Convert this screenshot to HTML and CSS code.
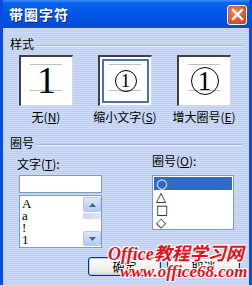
FILE: index.html
```html
<!DOCTYPE html>
<html lang="zh">
<head>
    <meta charset="UTF-8">
    <title>带圈字符</title>
    <link rel="stylesheet" href="styles.css">
</head>
<body>
    <div class="window">
        <div class="titlebar">
            <span class="title">带圈字符</span>
            <button class="close-button">
                <svg width="13" height="13" viewBox="0 0 13 13"><path d="M2 2 L11 11 M11 2 L2 11" stroke="#fff" stroke-width="2.4" stroke-linecap="square"/></svg>
            </button>
        </div>

        <div class="content">
            <div class="group-header"><span>样式</span><div class="group-line"></div></div>
            <div class="style-options">
                <div class="style-option">
                    <div class="preview"><span class="digit">1</span></div>
                    <div class="caption">无(<u>N</u>)</div>
                </div>
                <div class="style-option">
                    <div class="preview selected"><span class="ring small">1</span></div>
                    <div class="caption">缩小文字(<u>S</u>)</div>
                </div>
                <div class="style-option">
                    <div class="preview"><span class="ring big">1</span></div>
                    <div class="caption">增大圈号(<u>E</u>)</div>
                </div>
            </div>

            <div class="group-header second"><span>圈号</span><div class="group-line"></div></div>
            <div class="columns">
                <div class="col-left">
                    <div class="field-label">文字(<u>T</u>):</div>
                    <div class="text-input"></div>
                    <div class="listbox left-list">
                        <div class="items">
                            <div class="item">A</div>
                            <div class="item">a</div>
                            <div class="item">!</div>
                            <div class="item">1</div>
                        </div>
                        <div class="scrollbar">
                            <div class="scroll-btn"><svg width="7" height="4" viewBox="0 0 7 4"><path d="M0 4 L3.5 0 L7 4 Z" fill="#4d6185"/></svg></div>
                            <div class="thumb"></div>
                            <div class="track"></div>
                            <div class="scroll-btn"><svg width="7" height="4" viewBox="0 0 7 4"><path d="M0 0 L3.5 4 L7 0 Z" fill="#4d6185"/></svg></div>
                        </div>
                    </div>
                </div>
                <div class="col-right">
                    <div class="field-label right-label">圈号(<u>O</u>):</div>
                    <div class="listbox right-list">
                        <div class="item sym active">○</div>
                        <div class="item sym">△</div>
                        <div class="item sym">□</div>
                        <div class="item sym">◇</div>
                    </div>
                </div>
            </div>

            <div class="button-row">
                <button class="dlg-button">确定</button>
                <button class="dlg-button">取消</button>
            </div>
        </div>

        <div class="watermark">
            <div class="wm-top">Office教程学习网</div>
            <div class="wm-bottom">www.office68.com</div>
        </div>
    </div>
</body>
</html>
```

FILE: styles.css
```css
body {
    margin: 0;
    font-family: "Noto Sans CJK SC", "Liberation Sans", sans-serif;
    font-size: 12px;
    background-color: #c9d6f5;
}
.window {
    position: relative;
    width: 252px;
    height: 285px;
    box-sizing: border-box;
    border-left: 3px solid #0b4cdc;
    border-right: 3px solid #0b4cdc;
    overflow: hidden;
    background: repeating-linear-gradient(#cddaf6 0, #cddaf6 1px, #bfcff2 1px, #bfcff2 2px);
}
.titlebar {
    height: 28px;
    margin: 0 -3px;
    padding: 0 5px 0 9px;
    display: flex;
    align-items: center;
    justify-content: space-between;
    background: linear-gradient(#3d8ff8 0, #0a62ea 3px, #0058e6 45%, #004fdc 80%, #0b4cd6 100%);
}
.title {
    color: #fff;
    font-weight: bold;
    font-size: 14px;
    letter-spacing: 1px;
    text-shadow: 1px 1px 0 #0a2a8a;
}
.close-button {
    width: 20px;
    height: 20px;
    padding: 0;
    margin-top: 1px;
    border: 1px solid #fff;
    border-radius: 3px;
    background: radial-gradient(circle at 40% 35%, #f08a60 0, #e0552a 55%, #c33c14 100%);
    display: flex;
    align-items: center;
    justify-content: center;
}
.content {
    padding: 0 7px 0 7px;
}
.group-header {
    display: flex;
    align-items: center;
    height: 14px;
    margin-top: 9px;
    line-height: 14px;
    color: #000;
}
.group-header.second {
    margin-top: 12px;
}
.group-line {
    flex: 1;
    margin: 3px 0 0 3px;
    border-top: 1px solid #9fb2d8;
    border-bottom: 1px solid #eef3fd;
}
.style-options {
    display: flex;
    gap: 25px;
    padding-left: 9px;
    margin-top: 4px;
}
.style-option {
    width: 54px;
    display: flex;
    flex-direction: column;
    align-items: center;
}
.preview {
    width: 54px;
    height: 51px;
    box-sizing: border-box;
    background: #fff;
    border-top: 2px solid #404040;
    border-left: 2px solid #404040;
    border-right: 1px solid #d8d8d8;
    border-bottom: 1px solid #d8d8d8;
    display: flex;
    align-items: center;
    justify-content: center;
    background-image: linear-gradient(#c0c0c0, #c0c0c0), linear-gradient(#c0c0c0, #c0c0c0);
    background-size: 32px 1px;
    background-repeat: no-repeat;
    background-position: 9px 7px, 9px 33px;
}
.preview.selected {
    box-shadow: inset 0 0 0 2px #fff, inset 0 0 0 4px #4a72b0;
}
.digit {
    font-family: "Liberation Serif", serif;
    font-size: 38px;
    line-height: 38px;
    margin-top: -2px;
}
.ring {
    font-family: "Liberation Serif", serif;
    border: 1px solid #000;
    border-radius: 50%;
    display: flex;
    align-items: center;
    justify-content: center;
    box-sizing: border-box;
}
.ring.small {
    width: 22px;
    height: 22px;
    font-size: 19px;
}
.ring.big {
    width: 28px;
    height: 28px;
    font-size: 27px;
}
.caption {
    margin-top: 4px;
    line-height: 14px;
    white-space: nowrap;
}
.columns {
    display: flex;
    margin-top: 7px;
}
.col-left {
    width: 135px;
    padding-left: 7px;
}
.col-right {
    display: flex;
    flex-direction: column;
}
.field-label {
    line-height: 14px;
    height: 14px;
    margin-bottom: 4px;
}
.right-label {
    margin-top: -3px;
    margin-bottom: 7px;
    margin-left: 0;
}
.text-input {
    width: 83px;
    height: 18px;
    margin-left: 2px;
    box-sizing: border-box;
    background: #fff;
    border: 1px solid #7f9db9;
}
.listbox {
    background: #fff;
    border: 1px solid #7f9db9;
    box-sizing: border-box;
}
.left-list {
    width: 83px;
    height: 53px;
    margin-left: 2px;
    margin-top: 2px;
    display: flex;
}
.items {
    flex: 1;
    padding: 2px 0 0 2px;
}
.item {
    height: 12px;
    line-height: 12px;
    font-family: "Liberation Serif", serif;
    font-size: 13px;
}
.scrollbar {
    width: 18px;
    display: flex;
    flex-direction: column;
    padding: 1px 0;
}
.scroll-btn {
    height: 15px;
    border: 1px solid #b7c8ee;
    border-radius: 2px;
    box-sizing: border-box;
    background: linear-gradient(#dbe6fd, #b4c9f7);
    display: flex;
    align-items: center;
    justify-content: center;
}
.thumb {
    height: 6px;
    margin: 1px 0;
    background: linear-gradient(90deg, #c9d6ef, #dde6f7);
    border-radius: 2px;
}
.track {
    flex: 1;
}
.right-list {
    width: 82px;
    height: 55px;
    padding: 1px;
}
.item.sym {
    height: 13px;
    line-height: 13px;
    font-family: "DejaVu Sans", sans-serif;
    font-size: 13px;
    padding-left: 2px;
}
.item.active {
    background: #316ac5;
    color: #fff;
}
.button-row {
    display: flex;
    gap: 6px;
    margin-top: 9px;
    padding-left: 78px;
}
.dlg-button {
    width: 73px;
    height: 19px;
    padding: 0;
    font-family: "Noto Sans CJK SC", sans-serif;
    font-size: 12px;
    line-height: 15px;
    border: 1px solid #003c74;
    border-radius: 3px;
    background: linear-gradient(#ffffff, #ecebe6 80%, #d6d0c5);
    box-shadow: inset 0 0 0 1px #b7cdf3;
}
.watermark {
    position: absolute;
    left: 105px;
    top: 245px;
    color: #e8101a;
    font-style: italic;
    font-weight: bold;
    text-shadow: -1px -1px 0 #fff, 1px -1px 0 #fff, -1px 1px 0 #fff, 1px 1px 0 #fff;
}
.wm-top {
    font-family: "Liberation Serif", "Noto Sans CJK SC", serif;
    font-size: 18px;
    line-height: 18px;
}
.wm-bottom {
    font-family: "Liberation Serif", serif;
    font-size: 17px;
    line-height: 17px;
    margin-left: 12px;
}
```
